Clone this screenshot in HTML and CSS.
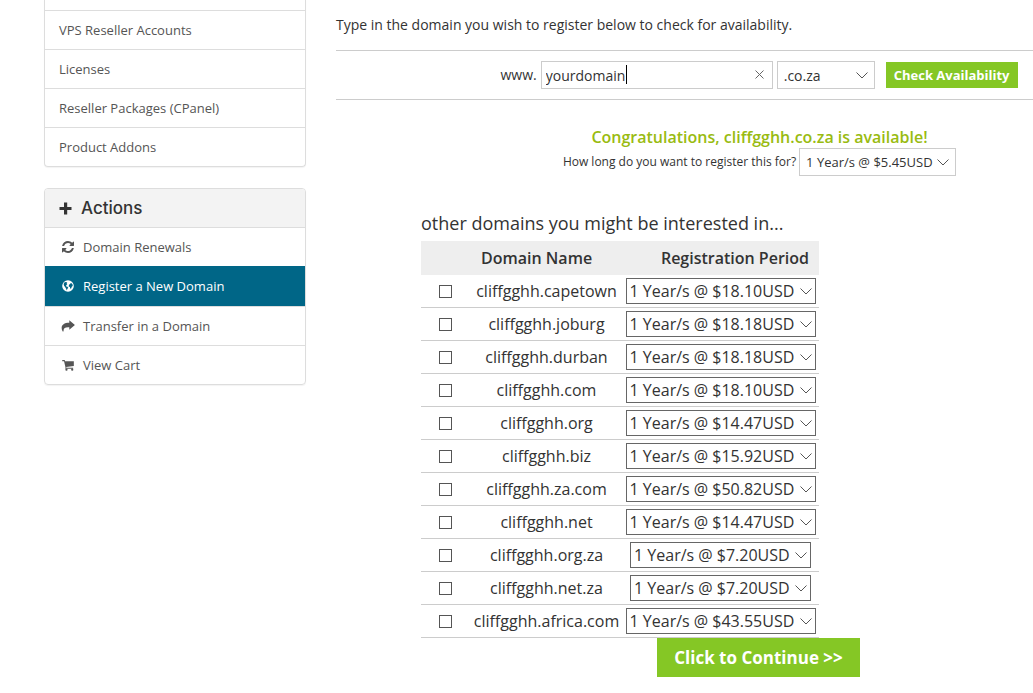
FILE: index.html
```
<!DOCTYPE html>
<html lang="en">

<head>
	<meta charset="UTF-8">
	<meta name="viewport" content="width=device-width, initial-scale=1.0">
	<title>Register a New Domain</title>
	<link rel="stylesheet" href="styles.css">
</head>

<body>
	<div class="page">
		<aside class="sidebar">
			<nav class="panel panel-top">
				<a class="item" href="#">VPS Reseller Accounts</a>
				<a class="item" href="#">Licenses</a>
				<a class="item" href="#">Reseller Packages (CPanel)</a>
				<a class="item" href="#">Product Addons</a>
			</nav>

			<nav class="panel">
				<h3 class="panel-title">
					<svg class="plus" viewBox="0 0 13 13"><path d="M5 0.5h3.2v4.4h4.3v3.2H8.200v4.400H5V8.100H.5V4.900H5z" /></svg>
					Actions
				</h3>
				<a class="item" href="#">
					<svg class="icon" viewBox="0 0 1536 1536"><path d="M1511 928q0 5-1 7-64 268-268 434.500T764 1536q-146 0-282.500-55T238 1324l-129 129q-19 19-45 19t-45-19-19-45V960q0-26 19-45t45-19h448q26 0 45 19t19 45-19 45l-137 137q71 66 161 102t187 36q134 0 250-65t186-179q11-17 53-117 8-23 30-23h192q13 0 22.500 9.500t9.500 22.500zM1536 128v448q0 26-19 45t-45 19h-448q-26 0-45-19t-19-45 19-45l138-138Q969 256 768 256q-134 0-250 65T332 500q-11 17-53 117-8 23-30 23H50q-13 0-22.500-9.500T18 608v-7q65-268 270-434.500T768 0q146 0 284 55.500T1297 212l130-129q19-19 45-19t45 19 19 45z" /></svg>
					Domain Renewals
				</a>
				<a class="item active" href="#">
					<svg class="icon" viewBox="0 0 14 14"><circle cx="7" cy="7" r="6.800" fill="#fff" /><path d="M3 2.600 4.800 2.200 6.200 3.300 5.300 4.200 6.300 4.800 5 6.200 4.600 7.200 6.400 7.800 7.300 9 6.200 10.400 5.600 12.200 4.800 10.200 3.600 8.300 2.400 6.800 1.900 4.600zM9.400 4.300l1.300-.8 1.500 1.600.4 2-1 .5-1 2.300-.9.200-.5-2-1.400-.6.300-1.800z" fill="#006687" /></svg>
					Register a New Domain
				</a>
				<a class="item" href="#">
					<svg class="icon icon-wide" viewBox="0 0 14 12"><path d="M8.300.3 13.900 5 8.300 9.700V7.200C4.500 6.900 2.300 7.800 2.500 11.600H1.700C-.9 6.700 1.300 2.800 8.300 2.800z" /></svg>
					Transfer in a Domain
				</a>
				<a class="item" href="#">
					<svg class="icon" viewBox="0 0 14 14"><path d="M.3 1.300h2.900l.3 1.200h10.300v5.700l-8.900 1 .2 1h7.900v1.200H3.900L4.100 9.800 2.400 2.500H.3z" /><circle cx="5.200" cy="12.500" r="1.300" /><circle cx="11.900" cy="12.500" r="1.300" /></svg>
					View Cart
				</a>
			</nav>
		</aside>

		<main class="content">
			<p class="intro">Type in the domain you wish to register below to check for availability.</p>

			<form class="search">
				<label for="domain">www.</label>
				<div class="domain-box">
					<input type="text" id="domain" class="field" value="yourdomain">
					<span class="caret"></span>
					<button type="button" class="clear" aria-label="Clear">
						<svg viewBox="0 0 9 9"><path d="M.5.500l8 8M8.500.500l-8 8" /></svg>
					</button>
				</div>
				<select class="field tld" aria-label="Extension">
					<option>.co.za</option>
				</select>
				<button type="button" class="btn btn-check">Check Availability</button>
			</form>

			<div class="result">
				<h2>Congratulations, cliffgghh.co.za is available!</h2>
				<div class="period">
					<label for="period">How long do you want to register this for?</label>
					<select class="field" id="period">
						<option>1 Year/s @ $5.45USD</option>
					</select>
				</div>
			</div>

			<div class="others">
				<h3>other domains you might be interested in...</h3>
				<table>
					<thead>
						<tr>
							<th class="col-check"></th>
							<th class="col-name">Domain Name</th>
							<th class="col-period">Registration Period</th>
						</tr>
					</thead>
					<tbody>
						<tr>
							<td><input type="checkbox" id="d1"></td>
							<td><label for="d1">cliffgghh.capetown</label></td>
							<td><select aria-label="Period for cliffgghh.capetown"><option>1 Year/s @ $18.10USD</option></select></td>
						</tr>
						<tr>
							<td><input type="checkbox" id="d2"></td>
							<td><label for="d2">cliffgghh.joburg</label></td>
							<td><select aria-label="Period for cliffgghh.joburg"><option>1 Year/s @ $18.18USD</option></select></td>
						</tr>
						<tr>
							<td><input type="checkbox" id="d3"></td>
							<td><label for="d3">cliffgghh.durban</label></td>
							<td><select aria-label="Period for cliffgghh.durban"><option>1 Year/s @ $18.18USD</option></select></td>
						</tr>
						<tr>
							<td><input type="checkbox" id="d4"></td>
							<td><label for="d4">cliffgghh.com</label></td>
							<td><select aria-label="Period for cliffgghh.com"><option>1 Year/s @ $18.10USD</option></select></td>
						</tr>
						<tr>
							<td><input type="checkbox" id="d5"></td>
							<td><label for="d5">cliffgghh.org</label></td>
							<td><select aria-label="Period for cliffgghh.org"><option>1 Year/s @ $14.47USD</option></select></td>
						</tr>
						<tr>
							<td><input type="checkbox" id="d6"></td>
							<td><label for="d6">cliffgghh.biz</label></td>
							<td><select aria-label="Period for cliffgghh.biz"><option>1 Year/s @ $15.92USD</option></select></td>
						</tr>
						<tr>
							<td><input type="checkbox" id="d7"></td>
							<td><label for="d7">cliffgghh.za.com</label></td>
							<td><select aria-label="Period for cliffgghh.za.com"><option>1 Year/s @ $50.82USD</option></select></td>
						</tr>
						<tr>
							<td><input type="checkbox" id="d8"></td>
							<td><label for="d8">cliffgghh.net</label></td>
							<td><select aria-label="Period for cliffgghh.net"><option>1 Year/s @ $14.47USD</option></select></td>
						</tr>
						<tr>
							<td><input type="checkbox" id="d9"></td>
							<td><label for="d9">cliffgghh.org.za</label></td>
							<td><select aria-label="Period for cliffgghh.org.za"><option>1 Year/s @ $7.20USD</option></select></td>
						</tr>
						<tr>
							<td><input type="checkbox" id="d10"></td>
							<td><label for="d10">cliffgghh.net.za</label></td>
							<td><select aria-label="Period for cliffgghh.net.za"><option>1 Year/s @ $7.20USD</option></select></td>
						</tr>
						<tr>
							<td><input type="checkbox" id="d11"></td>
							<td><label for="d11">cliffgghh.africa.com</label></td>
							<td><select aria-label="Period for cliffgghh.africa.com"><option>1 Year/s @ $43.55USD</option></select></td>
						</tr>
					</tbody>
				</table>
			</div>

			<div class="continue">
				<button type="button" class="btn btn-continue">Click to Continue &gt;&gt;</button>
			</div>
		</main>
	</div>
</body>

</html>
```
FILE: styles.css
```
* {
	box-sizing: border-box;
}

body {
	margin: 0;
	background: #fff;
	color: #333;
	font-family: "Open Sans", sans-serif;
	font-size: 14px;
	line-height: 20px;
}

h2,
h3,
p {
	margin: 0;
}

input,
select,
button {
	font-family: inherit;
	color: inherit;
	margin: 0;
}

.page {
	display: flex;
	gap: 30px;
	padding-left: 44px;
}

/* sidebar */
.sidebar {
	flex: 0 0 262px;
}

.panel {
	margin-bottom: 21px;
	border: 1px solid #ddd;
	border-radius: 4px;
	box-shadow: 0 1px 1px rgba(0, 0, 0, 0.05);
	overflow: hidden;
}

.panel-top {
	border-top: 0;
	border-radius: 0 0 4px 4px;
	padding-top: 10px;
}

.panel-title {
	display: flex;
	align-items: center;
	gap: 9px;
	padding: 9px 14px;
	background: #f3f3f3;
	font-family: Inter, sans-serif;
	font-size: 17px;
	font-weight: 500;
	line-height: 20px;
}

.plus {
	width: 13px;
	height: 13px;
	fill: #333;
}

.item {
	display: flex;
	align-items: center;
	gap: 9px;
	padding: 10px 14px;
	border-top: 1px solid #ddd;
	color: #555;
	font-size: 13px;
	line-height: 18px;
	text-decoration: none;
}

.item.active {
	background: #006687;
	border-top-color: #006687;
	border-bottom: 1px solid #006687;
	color: #fff;
}

.icon {
	width: 12px;
	height: 12px;
	margin-left: 3px;
	fill: #555;
}

.icon-wide {
	width: 14px;
	margin-left: 2px;
	margin-right: -1px;
}

/* main column */
.content {
	flex: 1;
	min-width: 0;
}

.intro {
	padding: 15px 0;
}

.search {
	display: flex;
	justify-content: center;
	align-items: center;
	padding: 10px 0 10px 149px;
	border-top: 1px solid #ccc;
	border-bottom: 1px solid #ccc;
}

.field {
	height: 28px;
	border: 1px solid #ccc;
	border-radius: 0;
	background-color: #fff;
	font-size: 14px;
	outline: none;
}

.domain-box {
	position: relative;
	margin: 0 4px;
}

.domain-box .field {
	display: block;
	width: 232px;
	padding: 0 24px 0 4px;
}

.caret {
	position: absolute;
	left: 85px;
	top: 4px;
	width: 1px;
	height: 19px;
	background: #000;
}

.clear {
	position: absolute;
	right: 9px;
	top: 9px;
	width: 9px;
	height: 9px;
	padding: 0;
	border: 0;
	background: none;
}

.clear svg {
	display: block;
	stroke: #666;
}

select {
	appearance: none;
	background: #fff url("data:image/svg+xml,%3Csvg xmlns='http://www.w3.org/2000/svg' width='12' height='7'%3E%3Cpath d='M.5.500 6 6 11.500.500' fill='none' stroke='%23555'/%3E%3C/svg%3E") no-repeat right 6px center;
}

.tld {
	width: 98px;
	margin-right: 11px;
}

select.field {
	padding: 0 22px 0 6px;
}

.btn {
	border: 0;
	background: #85c725;
	color: #fff;
	font-weight: 700;
	white-space: nowrap;
}

.btn-check {
	height: 26px;
	padding: 0 8px;
	font-size: 13px;
}

.result {
	padding: 27px 0 0 150px;
	text-align: center;
}

.result h2 {
	color: #9b1;
	font-size: 16px;
	font-weight: 600;
	line-height: 20px;
}

.period {
	display: flex;
	justify-content: center;
	align-items: center;
	gap: 3px;
	padding-top: 1px;
	font-size: 12px;
}

.period .field {
	font-size: 13px;
}

.others {
	padding: 35px 0 0 85px;
}

.others h3 {
	padding-bottom: 6px;
	font-size: 18px;
	font-weight: 400;
	line-height: 24px;
}

table {
	border-collapse: collapse;
	font-size: 16px;
}

th {
	padding: 7px 10px;
	background: #eee;
	font-weight: 600;
}

.col-check {
	width: 50px;
}

.col-name {
	width: 151px;
	text-align: left;
}

.col-period {
	width: 197px;
	text-align: right;
}

td {
	padding: 3px 0;
	border-bottom: 1px solid #ccc;
	text-align: center;
}

td select {
	display: block;
	height: 26px;
	margin: 0 auto;
	padding: 0 20px 0 3px;
	border: 1px solid #666;
	border-radius: 0;
	background-position: right 3px center;
	font-size: 16px;
}

td input {
	display: block;
	appearance: none;
	width: 13px;
	height: 13px;
	margin: 0 0 0 18px;
	border: 1px solid #555;
	background: #fff;
}

td input:checked {
	background: #555;
}

.continue {
	padding-left: 148px;
	text-align: center;
}

.btn-continue {
	height: 39px;
	padding: 0 17px;
	font-size: 17px;
}
```
